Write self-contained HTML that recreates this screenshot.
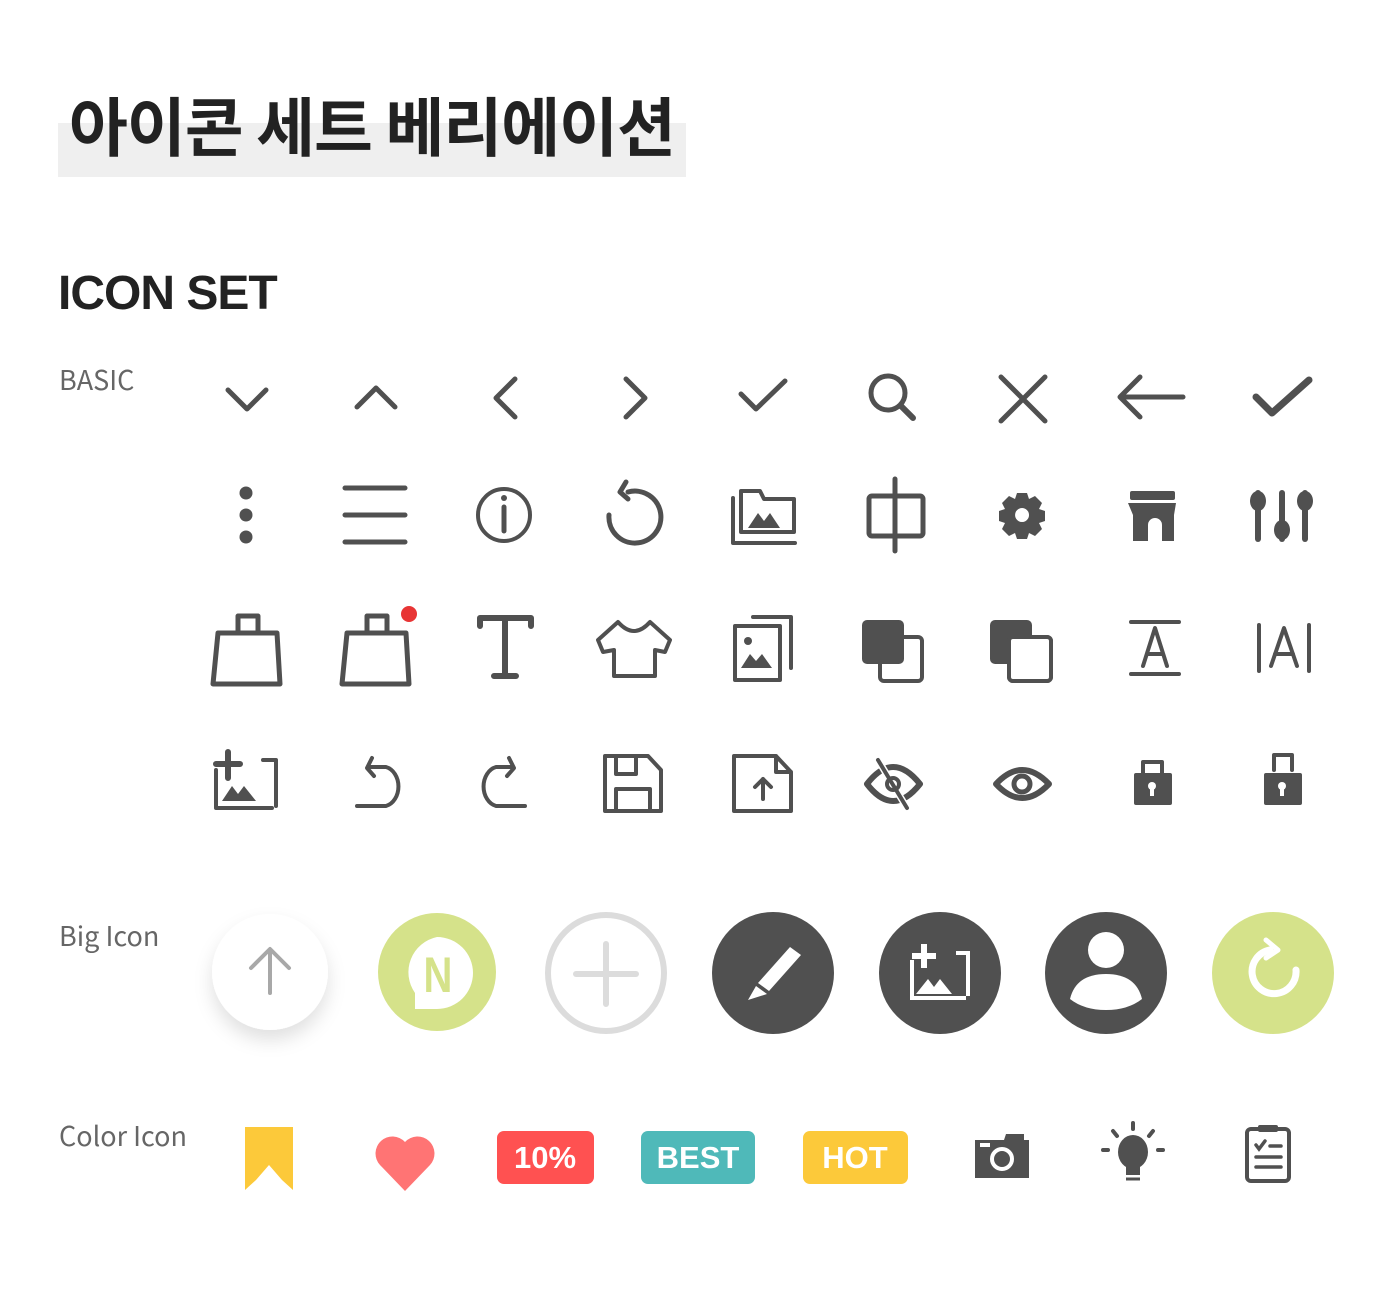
<!DOCTYPE html>
<html><head><meta charset="utf-8"><style>
html,body{margin:0;padding:0;background:#fff;width:1395px;height:1307px;overflow:hidden;position:relative}
.t{position:absolute;font-family:"Liberation Sans","Noto Sans CJK KR",sans-serif}
.l{font-family:"Noto Sans CJK KR","Liberation Sans",sans-serif;line-height:34px}
svg{position:absolute;left:0;top:0}
</style></head><body>
<div style="position:absolute;left:58px;top:123px;width:628px;height:54px;background:#efefef"></div>
<div class="t" style="left:69px;top:76px;font-family:'Noto Sans CJK KR',sans-serif;font-weight:700;font-size:64px;letter-spacing:-1px;color:#222;line-height:96px">아이콘 세트 베리에이션</div>
<div class="t" style="left:58px;top:262px;font-weight:700;font-size:48px;color:#222;letter-spacing:-1px;line-height:64px">ICON SET</div>
<div class="t l" style="left:59px;top:362px;font-size:27px;color:#666">BASIC</div>
<div class="t l" style="left:59px;top:918px;font-size:27px;color:#666">Big Icon</div>
<div class="t l" style="left:59px;top:1118px;font-size:27px;color:#666">Color Icon</div>
<svg width="1395" height="1307" viewBox="0 0 1395 1307">
<defs><filter id="sh" x="-50%" y="-50%" width="200%" height="200%"><feDropShadow dx="0" dy="10" stdDeviation="9" flood-color="#000" flood-opacity="0.12"/></filter></defs>
<g fill="none" stroke="#505050" stroke-width="5" stroke-linecap="round" stroke-linejoin="round">
<path d="M228 390 L247 409 L266 390"/>
<path d="M357 407 L376 388 L395 407"/>
<path d="M515 379 L496 398 L515 417"/>
<path d="M626 379 L645 398 L626 417"/>
<path d="M741 394 L756 409 L785 381"/>
<circle cx="888" cy="393" r="17"/><path d="M901 406 L913 418" stroke-width="6"/>
<path d="M1001 377 L1045 421 M1045 377 L1001 421"/>
<path d="M1183 397 L1121 397 M1140 377 L1120 397 L1140 417"/>
<path d="M1256 397 L1272 413 L1309 380" stroke-width="7"/>
<path d="M345 488 H405 M345 515 H405 M345 542 H405"/>
<circle cx="504" cy="515" r="26" stroke-width="4"/><path d="M504 507 V531"/>
<path d="M609 515 A26 26 0 1 0 628 492 M626 482 L620 492 L628 499"/>
<path d="M733 498 V543 H795" stroke-width="4"/>
<path d="M741 491 H760 L764 499 H794 V532 H741 Z" stroke-width="4"/>
<rect x="869" y="496" width="54" height="40" rx="3"/><path d="M895 479 V551"/>
<rect x="238" y="616" width="20" height="17" stroke-width="5"/>
<path d="M218 633 H277 L280 684 H213 Z"/>
<rect x="367" y="616" width="20" height="17" stroke-width="5"/>
<path d="M347 633 H406 L409 684 H342 Z"/>
<path d="M480 626 V618 H531 V626 M505 618 V676 M494 676 H516" stroke-width="6"/>
<path d="M618 622 Q634 640 650 622 L670 640 L665 652 L655 650 V676 H614 V650 L603 652 L598 640 Z" stroke-width="4"/>
<path d="M753 617 H791 V668" stroke-width="4"/>
<rect x="735" y="626" width="45" height="54" stroke-width="4"/>
<rect x="880" y="637" width="42" height="44" rx="4" stroke-width="4"/>
<rect x="1009" y="637" width="42" height="44" rx="4" stroke-width="4" fill="#fff"/>
<path d="M1131 622 H1179 M1131 674 H1179 M1143 666 L1155 628 L1167 666 M1147 654 H1163" stroke-width="4"/>
<path d="M1259 625 V671 M1309 625 V671 M1271 666 L1284 628 L1297 666 M1275 654 H1293" stroke-width="4"/>
<path d="M216 770 V808 H272 M263 760 H276 V806" stroke-width="4"/>
<path d="M228 752 V778 M216 764 H240" stroke-width="6"/>
<path d="M372 758 L367 768 L374 776 M368 767 H386 A16 20 0 0 1 386 806 H357" stroke-width="4"/>
<path d="M509 758 L514 768 L507 776 M513 767 H496 A16 20 0 0 0 496 806 H525" stroke-width="4"/>
<path d="M605 756 H648 L661 770 V811 H605 Z M616 756 V774 H636 V756 M616 811 V789 H650 V811" stroke-width="4"/>
<path d="M734 756 H776 L791 772 V811 H734 Z M776 756 V772 H791 M763 799 V779 M755 787 L763 779 L771 787" stroke-width="4"/>
<path d="M867 784 Q893 750 920 784 Q893 818 867 784 Z" stroke-width="6"/>
<path d="M878 760 L907 808" stroke="#fff" stroke-width="7"/><path d="M878 760 L907 808" stroke-width="4"/>
<path d="M996 784 Q1022 756 1049 784 Q1022 812 996 784 Z" stroke-width="6"/>
<circle cx="1022" cy="784" r="8" stroke-width="5"/>
<rect x="1143" y="762" width="19" height="16" stroke-width="4"/>
<path d="M1274 770 V755 H1292 V770" stroke-width="4"/>
</g>
<g fill="#505050">
<circle cx="246" cy="493" r="6.5"/><circle cx="246" cy="515" r="6.5"/><circle cx="246" cy="537" r="6.5"/>
<circle cx="504" cy="498" r="3"/>
<path d="M748 528 L758 513 L764 521 L770 513 L780 528 Z"/>
<path d="M1017 493 h10 l2 6 l6 -3 l7 7 l-3 6 l6 2 v10 l-6 2 l3 6 l-7 7 l-6 -3 l-2 6 h-10 l-2 -6 l-6 3 l-7 -7 l3 -6 l-6 -2 v-10 l6 -2 l-3 -6 l7 -7 l6 3 z M1022 508 a7 7 0 1 0 0.1 0 z" fill-rule="evenodd"/>
<rect x="1130" y="491" width="45" height="9" rx="2"/>
<path d="M1128 503 H1176 L1174 515 V541 H1162 V525 A7 7 0 0 0 1148 525 V541 H1133 V515 Z"/>
<rect x="1255" y="490" width="6" height="52" rx="3"/><rect x="1279" y="490" width="6" height="52" rx="3"/><rect x="1302" y="490" width="6" height="52" rx="3"/>
<ellipse cx="1258" cy="501" rx="8" ry="10"/><ellipse cx="1282" cy="530" rx="8" ry="10"/><ellipse cx="1305" cy="501" rx="8" ry="10"/>
<circle cx="748" cy="641" r="4"/><path d="M741 668 L750 654 L756 661 L762 654 L772 668 Z"/>
<rect x="862" y="620" width="42" height="44" rx="5"/>
<rect x="990" y="620" width="42" height="44" rx="5"/>
<rect x="1009" y="637" width="42" height="44" rx="4" fill="#fff" stroke="#505050" stroke-width="4"/>
<path d="M222 801 L232 786 L238 794 L244 786 L256 801 Z"/>
<rect x="1134" y="773" width="38" height="32" rx="2"/>
<rect x="1264" y="773" width="38" height="32" rx="2"/>
</g>
<circle cx="409" cy="614" r="8" fill="#e83535"/>
<circle cx="893" cy="784" r="6" fill="none" stroke="#505050" stroke-width="4"/>
<g fill="#fff"><circle cx="1152" cy="786" r="4"/><rect x="1150" y="786" width="4" height="10"/><circle cx="1282" cy="786" r="4"/><rect x="1280" y="786" width="4" height="10"/></g>
<circle cx="270" cy="972" r="58" fill="#fff" filter="url(#sh)"/>
<path d="M270 993 V950 M251 968 L270 949 L289 968" fill="none" stroke="#a8a8a8" stroke-width="4" stroke-linecap="round" stroke-linejoin="round"/>
<circle cx="437" cy="972" r="59" fill="#d5e28a"/>
<path d="M437 937 A36 36 0 1 1 437 1009 H415 V993 A36 36 0 0 1 437 937 Z" fill="#fff"/>
<text x="438" y="992" text-anchor="middle" font-family="Liberation Sans" font-weight="700" font-size="50" fill="#d5e28a" transform="translate(438 0) scale(0.8 1) translate(-438 0)">N</text>
<circle cx="606" cy="973" r="58" fill="none" stroke="#dcdcdc" stroke-width="6"/>
<path d="M606 944 V1004 M576 974 H636" stroke="#dcdcdc" stroke-width="6" stroke-linecap="round"/>
<circle cx="773" cy="973" r="61" fill="#505050"/>
<path d="M790 947 L801 955 L769 991 L758 983 Z M756 986 L767 994 L748 1000 Z" fill="#fff"/>
<circle cx="940" cy="973" r="61" fill="#505050"/>
<path d="M912 960 V998 H966 M956 953 H968 V996" fill="none" stroke="#fff" stroke-width="4"/>
<path d="M924 944 V968 M912 956 H936" stroke="#fff" stroke-width="6"/>
<path d="M916 994 L928 979 L934 987 L940 979 L952 994 Z" fill="#fff"/>
<circle cx="1106" cy="973" r="61" fill="#505050"/>
<circle cx="1106" cy="950" r="18" fill="#fff"/>
<path d="M1070 999 Q1076 974 1106 974 Q1136 974 1142 999 Q1128 1010 1106 1010 Q1084 1010 1070 999 Z" fill="#fff"/>
<circle cx="1273" cy="973" r="61" fill="#d5e28a"/>
<path d="M1270 950 A22 22 0 1 0 1296 970" fill="none" stroke="#fff" stroke-width="7" stroke-linecap="round"/>
<path d="M1266 940 L1278 950 L1266 958" fill="none" stroke="#fff" stroke-width="5" stroke-linecap="round" stroke-linejoin="round"/>
<path d="M245 1127 H293 V1190 L282 1180 L269 1165 L256 1180 L245 1190 Z" fill="#fcc93a"/>
<path d="M405 1191 L380 1165 A15 15 0 0 1 405 1142 A15 15 0 0 1 430 1165 Z" fill="#ff7474"/>
<rect x="497" y="1131" width="97" height="53" rx="7" fill="#ff5151"/>
<text x="545" y="1168" text-anchor="middle" font-family="Liberation Sans" font-weight="700" font-size="31" fill="#fff">10%</text>
<rect x="641" y="1131" width="114" height="53" rx="7" fill="#4fb9b9"/>
<text x="698" y="1168" text-anchor="middle" font-family="Liberation Sans" font-weight="700" font-size="31" fill="#fff">BEST</text>
<rect x="803" y="1131" width="105" height="53" rx="7" fill="#fcc93a"/>
<text x="855" y="1168" text-anchor="middle" font-family="Liberation Sans" font-weight="700" font-size="31" fill="#fff">HOT</text>
<path d="M975 1140 H1004 L1006 1134 H1024 V1140 H1029 V1178 H975 Z" fill="#505050"/>
<circle cx="1002" cy="1159" r="10" fill="none" stroke="#fff" stroke-width="4"/>
<rect x="980" y="1143" width="10" height="4" fill="#fff"/>
<ellipse cx="1133" cy="1152" rx="15" ry="17" fill="#505050"/>
<path d="M1126 1165 H1140 V1175 H1126 Z" fill="#505050"/>
<path d="M1126 1179 H1140" stroke="#505050" stroke-width="3"/>
<path d="M1133 1123 V1129 M1113 1131 L1117 1136 M1153 1131 L1149 1136 M1103 1150 H1108 M1158 1150 H1163" stroke="#505050" stroke-width="4" stroke-linecap="round"/>
<rect x="1247" y="1129" width="42" height="52" rx="4" fill="none" stroke="#505050" stroke-width="4"/>
<rect x="1258" y="1125" width="20" height="7" rx="2" fill="#505050"/>
<path d="M1256 1145 L1259 1149 L1265 1141 M1270 1146 H1281 M1256 1157 H1281 M1256 1167 H1281" fill="none" stroke="#505050" stroke-width="3.5" stroke-linecap="round"/>
</svg>
</body></html>
